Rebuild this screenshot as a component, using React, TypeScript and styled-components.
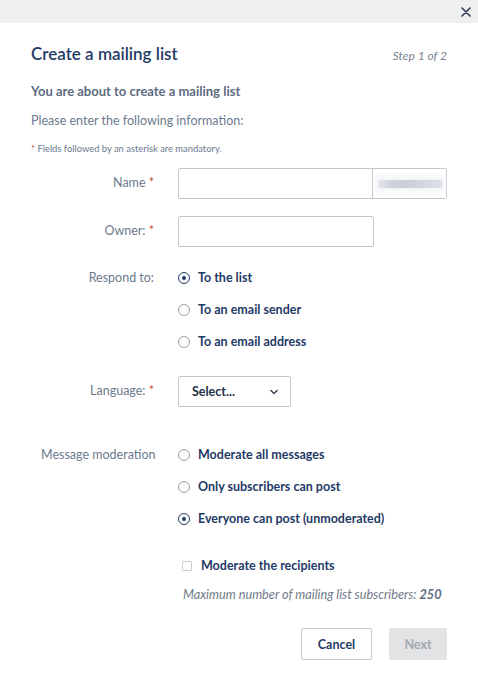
import React from "react";
import styled, { createGlobalStyle } from "styled-components";

const Global = createGlobalStyle`
  html, body { margin: 0; padding: 0; background: #fff; }
  body { font-family: Lato, "Open Sans", sans-serif; }
  * { box-sizing: border-box; }
`;

const navy = "#1f3a66";
const grey = "#6c7a8e";

const Modal = styled.div`
  width: 478px;
  height: 679px;
  background: #fff;
  display: flex;
  flex-direction: column;
`;

const TopBar = styled.div`
  height: 23px;
  background: #eef0ef;
  display: flex;
  justify-content: flex-end;
  align-items: center;
  padding-right: 6px;
`;

const CloseBtn = styled.button`
  border: none;
  background: none;
  padding: 0;
  width: 12px;
  height: 12px;
  display: flex;
  align-items: center;
  justify-content: center;
  cursor: pointer;
`;

const Body = styled.div`
  padding: 20px 31px 0 31px;
  display: flex;
  flex-direction: column;
`;

const Header = styled.div`
  display: flex;
  justify-content: space-between;
  align-items: baseline;
`;

const Title = styled.h1`
  margin: 0;
  font-size: 17px;
  font-weight: 600;
  color: ${navy};
  line-height: 22px;
`;

const Step = styled.span`
  font-size: 12px;
  font-style: italic;
  color: #7b8593;
`;

const Lead = styled.p`
  margin: 18px 0 0;
  font-size: 13px;
  font-weight: 700;
  color: #5d6b80;
  line-height: 16px;
`;

const Intro = styled.p`
  margin: 14px 0 0;
  font-size: 12.5px;
  color: ${grey};
  line-height: 16px;
`;

const Note = styled.p`
  margin: 14px 0 0;
  font-size: 9.4px;
  color: ${grey};
  line-height: 12px;
`;

const Star = styled.span`
  color: #c8502b;
`;

const Row = styled.div<{ $mt: number }>`
  display: grid;
  grid-template-columns: 123px 1fr;
  column-gap: 24px;
  margin-top: ${(p) => p.$mt}px;
  align-items: start;
`;

const Label = styled.div<{ $pt: number; $align?: string }>`
  text-align: ${(p) => p.$align || "right"};
  padding-top: ${(p) => p.$pt}px;
  font-size: 12.5px;
  color: ${grey};
  line-height: 16px;
  white-space: nowrap;
`;

const InputGroup = styled.div<{ $w: number }>`
  width: ${(p) => p.$w}px;
  height: 31px;
  border: 1px solid #c4c8cd;
  border-radius: 2px;
  display: flex;
`;

const TextInput = styled.input`
  flex: 1;
  border: none;
  outline: none;
  min-width: 0;
  background: transparent;
`;

const Addon = styled.div`
  width: 74px;
  border-left: 1px solid #c4c8cd;
  display: flex;
  align-items: center;
  justify-content: center;
`;

const Blur = styled.div`
  width: 64px;
  height: 8px;
  background: linear-gradient(90deg, #e6e8ec 0%, #cfd3db 20%, #c9ced8 45%, #d4d8df 70%, #dde0e6 100%);
  box-shadow: 0 0 4px 3px #f3f4f6;
`;

const Options = styled.div`
  display: flex;
  flex-direction: column;
  gap: 16px;
`;

const Option = styled.label`
  display: flex;
  align-items: center;
  gap: 8px;
  font-size: 12.5px;
  font-weight: 700;
  color: ${navy};
  line-height: 16px;
`;

const Radio = styled.span<{ $on?: boolean }>`
  width: 12px;
  height: 12px;
  border-radius: 50%;
  border: 1px solid ${(p) => (p.$on ? navy : "#9aa0a8")};
  display: flex;
  align-items: center;
  justify-content: center;
  &::after {
    content: "";
    width: 4px;
    height: 4px;
    border-radius: 50%;
    background: ${navy};
    display: ${(p) => (p.$on ? "block" : "none")};
  }
`;

const Select = styled.div`
  width: 113px;
  height: 31px;
  border: 1px solid #c4c8cd;
  border-radius: 2px;
  display: flex;
  align-items: center;
  justify-content: space-between;
  padding: 0 11px 0 13px;
  font-size: 12.5px;
  font-weight: 700;
  color: #23324a;
`;

const CheckRow = styled.label`
  display: flex;
  align-items: center;
  gap: 9px;
  padding-left: 4px;
  font-size: 12.5px;
  font-weight: 700;
  color: ${navy};
  line-height: 16px;
`;

const Box = styled.span`
  width: 10px;
  height: 10px;
  border: 1px solid #c9cdd2;
  border-radius: 1px;
`;

const Max = styled.p`
  margin: 12px 0 0 5px;
  font-size: 12.7px;
  font-style: italic;
  color: #6f7a89;
  line-height: 16px;
  white-space: nowrap;
  b { font-weight: 700; color: #5d6b80; }
`;

const Footer = styled.div`
  display: flex;
  justify-content: flex-end;
  gap: 17px;
  margin-top: 26px;
`;

const Button = styled.button<{ $primary?: boolean }>`
  height: 32px;
  width: ${(p) => (p.$primary ? 58 : 71)}px;
  padding: 0;
  border-radius: 2px;
  font-family: inherit;
  font-size: 12.5px;
  font-weight: 700;
  border: 1px solid ${(p) => (p.$primary ? "#e1e3e5" : "#c4c8cd")};
  background: ${(p) => (p.$primary ? "#e1e3e5" : "#fff")};
  color: ${(p) => (p.$primary ? "#a2a8b0" : navy)};
`;

export default function App() {
  return (
    <>
      <Global />
      <Modal>
        <TopBar>
          <CloseBtn aria-label="Close">
            <svg width="10" height="10" viewBox="0 0 10 10">
              <path d="M1 1 L9 9 M9 1 L1 9" stroke="#2d3a4f" strokeWidth="1.6" strokeLinecap="round" />
            </svg>
          </CloseBtn>
        </TopBar>
        <Body>
          <Header>
            <Title>Create a mailing list</Title>
            <Step>Step 1 of 2</Step>
          </Header>
          <Lead>You are about to create a mailing list</Lead>
          <Intro>Please enter the following information:</Intro>
          <Note>
            <Star>*</Star> Fields followed by an asterisk are mandatory.
          </Note>

          <Row $mt={13}>
            <Label $pt={7}>
              Name <Star>*</Star>
            </Label>
            <InputGroup $w={269}>
              <TextInput />
              <Addon>
                <Blur />
              </Addon>
            </InputGroup>
          </Row>

          <Row $mt={17}>
            <Label $pt={7}>
              Owner: <Star>*</Star>
            </Label>
            <InputGroup $w={196}>
              <TextInput />
            </InputGroup>
          </Row>

          <Row $mt={23}>
            <Label $pt={0}>Respond to:</Label>
            <Options>
              <Option>
                <Radio $on />
                To the list
              </Option>
              <Option>
                <Radio />
                To an email sender
              </Option>
              <Option>
                <Radio />
                To an email address
              </Option>
            </Options>
          </Row>

          <Row $mt={26}>
            <Label $pt={7}>
              Language: <Star>*</Star>
            </Label>
            <div>
              <Select>
                Select...
                <svg width="10" height="6" viewBox="0 0 10 6">
                  <path d="M1.5 1 L5 4.5 L8.5 1" stroke="#2d3a4f" strokeWidth="1.3" fill="none" />
                </svg>
              </Select>
            </div>
          </Row>

          <Row $mt={40}>
            <Label $pt={0} $align="left">
              <span style={{ paddingLeft: 10 }}>Message moderation</span>
            </Label>
            <Options>
              <Option>
                <Radio />
                Moderate all messages
              </Option>
              <Option>
                <Radio />
                Only subscribers can post
              </Option>
              <Option>
                <Radio $on />
                Everyone can post (unmoderated)
              </Option>
            </Options>
          </Row>

          <Row $mt={31}>
            <div />
            <div>
              <CheckRow>
                <Box />
                Moderate the recipients
              </CheckRow>
              <Max>
                Maximum number of mailing list subscribers: <b>250</b>
              </Max>
            </div>
          </Row>

          <Footer>
            <Button>Cancel</Button>
            <Button $primary>Next</Button>
          </Footer>
        </Body>
      </Modal>
    </>
  );
}
